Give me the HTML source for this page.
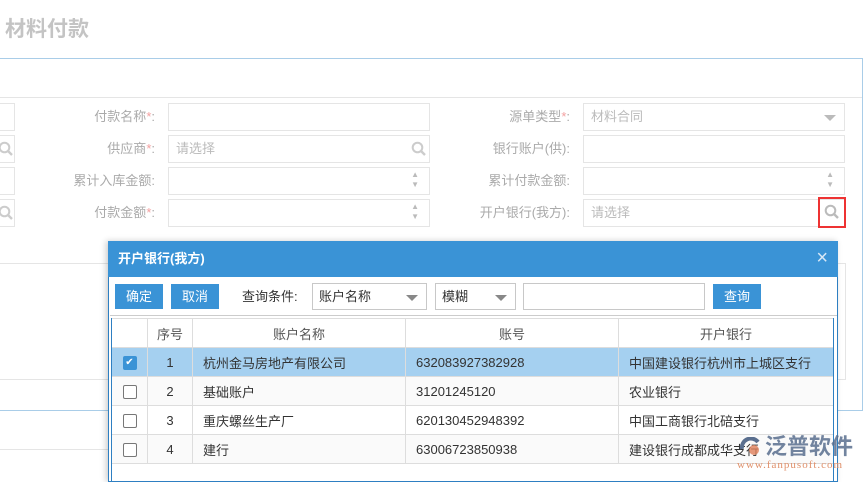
<!DOCTYPE html>
<html><head><meta charset="utf-8">
<style>
*{margin:0;padding:0;box-sizing:border-box}
body{width:864px;height:482px;overflow:hidden;background:#fff;position:relative;font-family:"Liberation Sans","Noto Sans CJK SC",sans-serif;font-size:13px;color:#333}
.a{position:absolute;white-space:nowrap}
.lbl{position:absolute;color:#aaa;font-size:13px;text-align:right;width:150px;line-height:27px}
.lbl i{color:#f3a0a0;font-style:normal}
.inp{position:absolute;border:1px solid #e5e5e5;height:28px;background:#fff;color:#bbb;line-height:26px;padding-left:7px}
.hl{position:absolute;height:1px;background:#e5e5e5}
.btn{position:absolute;background:#3a93d6;color:#fff;text-align:center;line-height:25px;height:25px;width:48px}
.sel{position:absolute;border:1px solid #c8c8c8;height:27px;line-height:25px;padding-left:6px;color:#333;background:#fff}
.tri{position:absolute;right:8px;top:11px;width:0;height:0;border-left:6px solid transparent;border-right:6px solid transparent;border-top:6px solid #888}
table{position:absolute;left:111px;top:318px;width:723px;border-collapse:collapse;border:1px solid #2e7fc2;border-bottom:none}
td{height:29px;border:1px solid #ddd;font-size:13px}
.c{text-align:center}
.p{padding-left:10px}
.cb{display:inline-block;width:14px;height:14px;border:1px solid #777;border-radius:2px;vertical-align:middle;background:#fff}
</style></head><body>
<div class="a" style="left:5px;top:13px;font-size:21px;font-weight:bold;color:#c4c4c4">材料付款</div>
<div class="a" style="left:0;top:58px;width:863px;height:1px;background:#a9cde8"></div>
<div class="a" style="left:862px;top:58px;width:1px;height:352px;background:#a9cde8"></div>
<div class="a" style="left:0;top:410px;width:863px;height:1px;background:#a9cde8"></div>
<div class="hl" style="left:0;top:97px;width:862px"></div>
<div class="hl" style="left:0;top:263px;width:108px"></div>
<div class="hl" style="left:0;top:379px;width:108px"></div>
<div class="hl" style="left:0;top:449px;width:108px"></div>
<div class="a" style="left:838px;top:263px;width:8px;height:117px;border:1px solid #e5e5e5;border-left:none"></div>
<div class="inp" style="left:-2px;top:103px;width:17px"></div>
<div class="inp" style="left:-2px;top:135px;width:17px"></div>
<div class="inp" style="left:-2px;top:167px;width:17px"></div>
<div class="inp" style="left:-2px;top:199px;width:17px"></div>

<div class="lbl" style="left:5px;top:103px">付款名称<i>*</i>:</div>
<div class="lbl" style="left:5px;top:135px">供应商<i>*</i>:</div>
<div class="lbl" style="left:5px;top:167px">累计入库金额:</div>
<div class="lbl" style="left:5px;top:199px">付款金额<i>*</i>:</div>
<div class="inp" style="left:168px;top:103px;width:262px"></div>
<div class="inp" style="left:168px;top:135px;width:262px">请选择</div>
<div class="inp" style="left:168px;top:167px;width:262px"><span class="a" style="right:10px;top:2px;font-size:8px;line-height:10px;color:#bbb">▲<br>▼</span></div>
<div class="inp" style="left:168px;top:199px;width:262px"><span class="a" style="right:10px;top:2px;font-size:8px;line-height:10px;color:#bbb">▲<br>▼</span></div>

<div class="lbl" style="left:420px;top:103px">源单类型<i>*</i>:</div>
<div class="lbl" style="left:420px;top:135px">银行账户(供):</div>
<div class="lbl" style="left:420px;top:167px">累计付款金额:</div>
<div class="lbl" style="left:420px;top:199px">开户银行(我方):</div>
<div class="inp" style="left:583px;top:103px;width:262px">材料合同<span class="tri" style="border-top-color:#bbb"></span></div>
<div class="inp" style="left:583px;top:135px;width:262px"></div>
<div class="inp" style="left:583px;top:167px;width:262px"><span class="a" style="right:10px;top:2px;font-size:8px;line-height:10px;color:#bbb">▲<br>▼</span></div>
<div class="inp" style="left:583px;top:199px;width:262px">请选择</div>
<div class="a" style="left:818px;top:197px;width:28px;height:31px;border:2px solid #ee3333"></div>
<svg class="a" style="left:824px;top:204px" width="16" height="16"><circle cx="6.5" cy="6.5" r="4.8" fill="none" stroke="#bbb" stroke-width="2"/><line x1="10" y1="10" x2="14" y2="14" stroke="#bbb" stroke-width="2.4"/></svg>
<svg class="a" style="left:411px;top:141px" width="16" height="16"><circle cx="6.5" cy="6.5" r="4.8" fill="none" stroke="#ccc" stroke-width="2"/><line x1="10" y1="10" x2="14" y2="14" stroke="#ccc" stroke-width="2.4"/></svg>
<svg class="a" style="left:-2px;top:141px" width="16" height="16"><circle cx="6.5" cy="6.5" r="4.8" fill="none" stroke="#ccc" stroke-width="2"/><line x1="10" y1="10" x2="14" y2="14" stroke="#ccc" stroke-width="2.4"/></svg>
<svg class="a" style="left:-2px;top:205px" width="16" height="16"><circle cx="6.5" cy="6.5" r="4.8" fill="none" stroke="#ccc" stroke-width="2"/><line x1="10" y1="10" x2="14" y2="14" stroke="#ccc" stroke-width="2.4"/></svg>

<!-- dialog -->
<div class="a" style="left:108px;top:241px;width:730px;height:241px;background:#fff;border:1px solid #2e7fc2;box-shadow:-2px 0 6px rgba(0,0,0,.2)"></div>
<div class="a" style="left:108px;top:241px;width:730px;height:36px;background:#3a93d6;color:#fff;font-weight:bold;font-size:13px;line-height:35px;padding-left:10px">开户银行(我方)<span class="a" style="right:10px;top:0;font-weight:normal;font-size:20px;color:#d8e8f6">×</span></div>
<div class="btn" style="left:115px;top:284px">确定</div>
<div class="btn" style="left:171px;top:284px">取消</div>
<div class="a" style="left:242px;top:284px;line-height:25px;color:#333">查询条件:</div>
<div class="sel" style="left:312px;top:283px;width:115px">账户名称<span class="tri"></span></div>
<div class="sel" style="left:435px;top:283px;width:81px">模糊<span class="tri"></span></div>
<div class="sel" style="left:523px;top:283px;width:182px"></div>
<div class="btn" style="left:713px;top:284px">查询</div>
<div class="a" style="left:110px;top:315px;width:727px;height:1px;background:#ccc"></div>
<table>
<tr style="color:#555"><td style="width:36px"></td><td class="c" style="width:45px">序号</td><td class="c" style="width:213px">账户名称</td><td class="c" style="width:213px">账号</td><td class="c">开户银行</td></tr>
<tr style="background:#a5d0f0"><td class="c"><span class="cb" style="background:#3a93d6;border-color:#3a93d6;color:#fff;font-size:10px;line-height:12px;text-align:center">✔</span></td><td class="c">1</td><td class="p">杭州金马房地产有限公司</td><td class="p">632083927382928</td><td class="p">中国建设银行杭州市上城区支行</td></tr>
<tr style="background:#fafafa"><td class="c"><span class="cb"></span></td><td class="c">2</td><td class="p">基础账户</td><td class="p">31201245120</td><td class="p">农业银行</td></tr>
<tr><td class="c"><span class="cb"></span></td><td class="c">3</td><td class="p">重庆螺丝生产厂</td><td class="p">620130452948392</td><td class="p">中国工商银行北碚支行</td></tr>
<tr style="background:#fafafa"><td class="c"><span class="cb"></span></td><td class="c">4</td><td class="p">建行</td><td class="p">63006723850938</td><td class="p">建设银行成都成华支行</td></tr>
</table>
<div class="a" style="left:111px;top:318px;width:1px;height:164px;background:#2e7fc2"></div>
<div class="a" style="left:833px;top:318px;width:1px;height:164px;background:#2e7fc2"></div>
<!-- watermark -->
<svg class="a" style="left:738px;top:437px" width="26" height="24"><path d="M4 12 A9 9 0 0 1 20 5" fill="none" stroke="#5a6f8f" stroke-width="4"/><circle cx="16" cy="13" r="5" fill="#e0805a" opacity=".8"/></svg>
<div class="a" style="left:765px;top:434px;font-size:22px;line-height:26px;font-weight:bold;color:#5a6f8f;opacity:.85">泛普软件</div>
<div class="a" style="left:737px;top:459px;font-size:11px;font-family:'Liberation Serif',serif;color:#e0906a;letter-spacing:1px">www.fanpusoft.com</div>
</body></html>
